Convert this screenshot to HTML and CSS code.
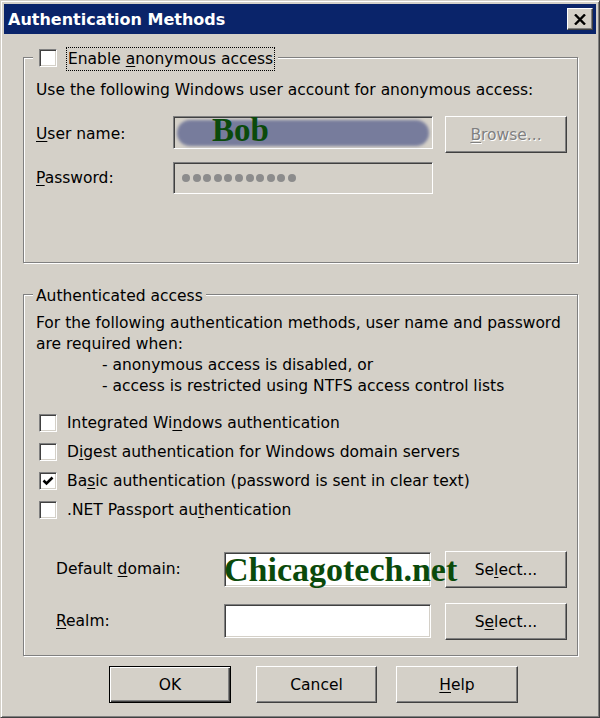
FILE: index.html
```html
<!DOCTYPE html>
<html lang="en">
<head>
    <meta charset="UTF-8">
    <title>Authentication Methods</title>
    <link rel="stylesheet" href="styles.css">
</head>
<body>
    <div class="window">
        <div class="titlebar">
            <span class="title">Authentication Methods</span>
            <span class="close-btn">
                <svg width="12" height="11" viewBox="0 0 12 11"><path d="M1 0.5 L11 10.5 M11 0.5 L1 10.5" stroke="#000" stroke-width="2.4"/></svg>
            </span>
        </div>
        <div class="content">
            <!-- Anonymous access -->
            <fieldset class="group group-anon">
                <legend class="legend-check">
                    <span class="checkbox"></span>
                    <span class="focus-label">Enable <u>a</u>nonymous access</span>
                </legend>
                <p class="note">Use the following Windows user account for anonymous access:</p>
                <div class="field-row">
                    <label class="field-label"><u>U</u>ser name:</label>
                    <div class="input input-disabled user-input">
                        <span class="scribble"></span>
                        <span class="stamp stamp-bob">Bob</span>
                    </div>
                    <span class="button button-disabled"><u>B</u>rowse...</span>
                </div>
                <div class="field-row row-password">
                    <label class="field-label label-password"><u>P</u>assword:</label>
                    <div class="input input-disabled pass-input">
                        <span class="dot"></span><span class="dot"></span><span class="dot"></span><span class="dot"></span>
                        <span class="dot"></span><span class="dot"></span><span class="dot"></span><span class="dot"></span>
                        <span class="dot"></span><span class="dot"></span><span class="dot"></span>
                    </div>
                </div>
            </fieldset>

            <!-- Authenticated access -->
            <fieldset class="group group-auth">
                <legend class="legend-text">Authenticated access</legend>
                <div class="desc">
                    <div>For the following authentication methods, user name and password</div>
                    <div>are required when:</div>
                    <div class="indent">- anonymous access is disabled, or</div>
                    <div class="indent">- access is restricted using NTFS access control lists</div>
                </div>
                <div class="checks">
                    <div class="check-row"><span class="checkbox"></span><span>Integrated Wi<u>n</u>dows authentication</span></div>
                    <div class="check-row"><span class="checkbox"></span><span>D<u>i</u>gest authentication for Windows domain servers</span></div>
                    <div class="check-row">
                        <span class="checkbox">
                            <svg width="12" height="12" viewBox="0 0 12 12"><path d="M1.5 5.5 L4.5 8.5 L10.5 2.5" fill="none" stroke="#000" stroke-width="2.6"/></svg>
                        </span>
                        <span>Ba<u>s</u>ic authentication (password is sent in clear text)</span>
                    </div>
                    <div class="check-row"><span class="checkbox"></span><span>.NET Passport au<u>t</u>hentication</span></div>
                </div>
                <div class="domain-row">
                    <label class="domain-label">Default <u>d</u>omain:</label>
                    <div class="input domain-input"></div>
                    <span class="button">Se<u>l</u>ect...</span>
                    <span class="stamp stamp-site">Chicagotech.net</span>
                </div>
                <div class="domain-row realm-row">
                    <label class="domain-label"><u>R</u>ealm:</label>
                    <div class="input domain-input realm-input"></div>
                    <span class="button">S<u>e</u>lect...</span>
                </div>
            </fieldset>

            <div class="actions">
                <span class="button button-default">OK</span>
                <span class="button btn-cancel">Cancel</span>
                <span class="button btn-help"><u>H</u>elp</span>
            </div>
        </div>
    </div>
</body>
</html>
```

FILE: styles.css
```css
/* Classic Windows dialog */
* {
    box-sizing: border-box;
}
body {
    margin: 0;
    background-color: #d4d0c8;
    font-family: "DejaVu Sans", Tahoma, sans-serif;
    font-size: 15.5px;
    color: #000;
}
u {
    text-decoration-thickness: 1px;
    text-underline-offset: 2px;
}
.window {
    width: 600px;
    height: 718px;
    padding: 3px;
    background-color: #d4d0c8;
    border: 1px solid;
    border-color: #d4d0c8 #404040 #404040 #d4d0c8;
    box-shadow: inset 1px 1px 0 #fff, inset -1px -1px 0 #808080;
}
.titlebar {
    height: 30px;
    display: flex;
    align-items: center;
    justify-content: space-between;
    padding: 0 3px 0 4px;
    background-color: #0a246a;
}
.title {
    color: #fff;
    font-weight: bold;
    font-size: 16px;
}
.close-btn {
    width: 26px;
    height: 22px;
    display: flex;
    align-items: center;
    justify-content: center;
    background-color: #d4d0c8;
    border: 1px solid;
    border-color: #fff #404040 #404040 #fff;
    box-shadow: inset -1px -1px 0 #808080;
}
.content {
    padding: 9px 18px 0 19px;
}

/* group boxes */
.group {
    margin: 0;
    min-width: 0;
    padding: 0 10px 68px 12px;
    border: 1px solid #808080;
    box-shadow: 1px 1px 0 #fff, inset 1px 1px 0 #fff;
}
.group-auth {
    margin-top: 19px;
    padding-bottom: 15px;
}
.legend-check {
    display: flex;
    align-items: flex-end;
    height: 28px;
    margin-left: -3px;
    padding: 0 3px 0 6px;
    background-color: #d4d0c8;
}
.legend-check .checkbox {
    margin-bottom: 4px;
}
.legend-text {
    margin-left: -3px;
    padding: 4px 3px 0;
    line-height: 21px;
    background-color: #d4d0c8;
}
.focus-label {
    height: 24px;
    line-height: 23px;
    margin-left: 9px;
    padding: 0 1px;
    border: 1px dotted #000;
}
.note {
    margin: 9px 0 0;
    line-height: 21px;
}

/* controls */
.checkbox {
    width: 18px;
    height: 18px;
    flex: none;
    display: flex;
    align-items: center;
    justify-content: center;
    background-color: #fff;
    border: 1px solid;
    border-color: #808080 #fff #fff #808080;
    box-shadow: inset 1px 1px 0 #404040, inset -1px -1px 0 #d4d0c8;
}
.input {
    position: relative;
    height: 33px;
    background-color: #fff;
    border: 1px solid;
    border-color: #808080 #fff #fff #808080;
    box-shadow: inset 1px 1px 0 #404040, inset -1px -1px 0 #d4d0c8;
}
.input-disabled {
    background-color: #d4d0c8;
}
.button {
    display: flex;
    align-items: center;
    justify-content: center;
    width: 122px;
    height: 37px;
    flex: none;
    background-color: #d4d0c8;
    border: 1px solid;
    border-color: #fff #404040 #404040 #fff;
    box-shadow: inset -1px -1px 0 #808080;
}
.button-disabled {
    color: #808080;
    text-shadow: 1px 1px 0 #fff;
}
.button-default {
    border-color: #000;
    box-shadow: inset 1px 1px 0 #fff, inset -1px -1px 0 #404040, inset -2px -2px 0 #808080;
}

/* anonymous account fields */
.field-row {
    display: flex;
    align-items: flex-start;
    margin-top: 15px;
}
.row-password {
    margin-top: 9px;
}
.field-label {
    width: 137px;
    line-height: 37px;
}
.label-password {
    line-height: 32px;
}
.user-input {
    width: 260px;
    margin-right: 12px;
}
.pass-input {
    width: 260px;
    height: 32px;
    display: flex;
    align-items: center;
    gap: 2.6px;
    padding-left: 8px;
}
.dot {
    width: 8px;
    height: 8px;
    border-radius: 50%;
    background-color: #8c8c8c;
}
.scribble {
    position: absolute;
    left: 3px;
    top: 3px;
    width: 252px;
    height: 26px;
    border-radius: 13px;
    background-color: #777c9c;
    filter: blur(1.5px);
}
.stamp {
    position: absolute;
    font-family: "Liberation Serif", "Times New Roman", serif;
    font-weight: bold;
    color: #0b4a0b;
    white-space: nowrap;
}
.stamp-bob {
    left: 38px;
    top: -3px;
    font-size: 33px;
    line-height: 33px;
}

/* authenticated access */
.desc {
    margin-top: 6px;
    line-height: 21px;
}
.indent {
    padding-left: 66px;
}
.checks {
    margin-top: 11px;
}
.check-row {
    display: flex;
    align-items: center;
    height: 29px;
    padding-left: 3px;
}
.check-row .checkbox {
    margin-right: 10px;
}
.domain-row {
    position: relative;
    display: flex;
    align-items: flex-start;
    margin-top: 27px;
    padding-left: 20px;
}
.realm-row {
    margin-top: 15px;
}
.domain-label {
    width: 168px;
    line-height: 37px;
}
.domain-input {
    width: 207px;
    height: 35px;
    margin-top: 1px;
    margin-right: 14px;
}
.realm-input {
    height: 34px;
}
.stamp-site {
    left: 188px;
    top: 2px;
    font-size: 34px;
    line-height: 34px;
}

/* dialog buttons */
.actions {
    display: flex;
    margin-top: 10px;
    padding-left: 86px;
}
.btn-cancel {
    width: 121px;
    margin-left: 25px;
}
.btn-help {
    margin-left: 19px;
}
```
